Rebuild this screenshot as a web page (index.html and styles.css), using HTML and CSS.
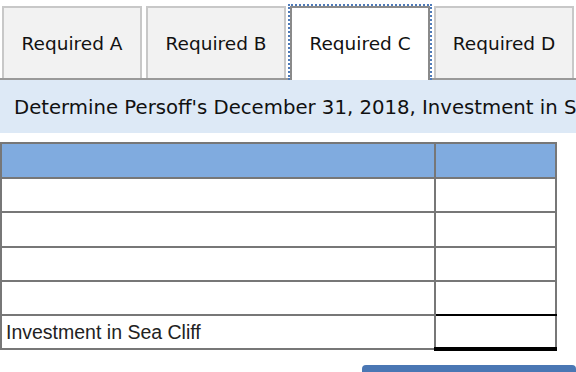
FILE: index.html
```html
<!DOCTYPE html>
<html lang="en">
<head>
  <meta charset="UTF-8">
  <title>Required C</title>
  <link rel="stylesheet" href="styles.css">
</head>
<body>
  <div class="tabs">
    <button class="tab">Required A</button>
    <button class="tab">Required B</button>
    <button class="tab active">Required C</button>
    <button class="tab">Required D</button>
  </div>

  <div class="prompt">Determine Persoff's December 31, 2018, Investment in Sea Cliff account balance.</div>

  <table class="grid">
    <tr class="head"><th class="desc"></th><th class="amt"></th></tr>
    <tr><td class="desc"></td><td class="amt"></td></tr>
    <tr><td class="desc"></td><td class="amt"></td></tr>
    <tr><td class="desc"></td><td class="amt"></td></tr>
    <tr class="subtotal"><td class="desc"></td><td class="amt"></td></tr>
    <tr class="total"><td class="desc">Investment in Sea Cliff</td><td class="amt"></td></tr>
  </table>

  <div class="actions">
    <button class="next">Required D</button>
  </div>
</body>
</html>
```

FILE: styles.css
```css
body {
  margin: 0;
  background: #fff;
  font-family: "DejaVu Sans", Verdana, sans-serif;
  overflow: hidden;
}
.tabs {
  display: flex;
  gap: 4px;
  padding: 6px 0 0 2px;
  border-bottom: 2px solid #9a9a9a;
}
.tab {
  position: relative;
  width: 140px;
  height: 72px;
  margin: 0;
  padding: 0;
  font-family: "DejaVu Sans", Verdana, sans-serif;
  font-size: 18.5px;
  color: #111;
  background: #f2f2f2;
  border: 2px solid #c8c8c8;
  border-bottom: none;
}
.tab.active {
  background: #fff;
  border-color: #8a8a8a;
  height: 74px;
  margin-bottom: -2px;
  padding-bottom: 2px;
}
.tab.active::before {
  content: "";
  position: absolute;
  top: -4px;
  left: -4px;
  right: -4px;
  bottom: 0;
  border: 2px dotted #4f7bb8;
  border-bottom: none;
}
.prompt {
  background: #dde9f6;
  height: 53px;
  line-height: 56px;
  padding-left: 14px;
  font-size: 19.7px;
  color: #111;
  white-space: nowrap;
  overflow: hidden;
}
.grid {
  margin-top: 9px;
  border-collapse: collapse;
  width: 557px;
}
.grid th, .grid td {
  border: 2px solid #777;
  padding: 0 4px;
  height: 34.3px;
  box-sizing: border-box;
}
.grid .desc {
  width: 434px;
  text-align: left;
  font-family: "Liberation Sans", Arial, sans-serif;
  font-size: 19.5px;
  color: #222;
}
.grid .head th {
  background: #80abdf;
  height: 35px;
}
.grid .subtotal .amt {
  border-bottom-color: #000;
}
.grid .total .amt {
  border-bottom: 4px solid #000;
}
.actions {
  display: flex;
  justify-content: flex-end;
  padding-top: 14px;
}
.next {
  width: 214px;
  height: 44px;
  margin: 0;
  border: none;
  border-radius: 4px;
  background: #4a77b4;
  color: #fff;
  font-size: 16px;
  padding-top: 20px;
}
```
